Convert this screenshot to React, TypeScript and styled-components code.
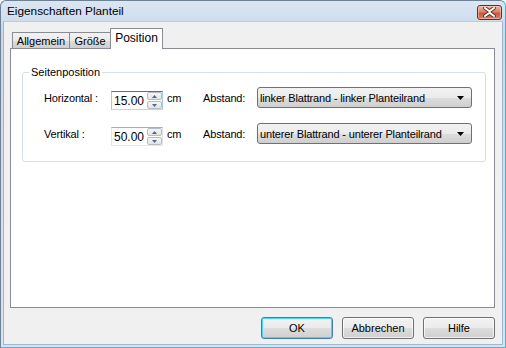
import React from 'react';
import styled, { createGlobalStyle } from 'styled-components';

const GlobalStyle = createGlobalStyle`
  html, body {
    margin: 0;
    padding: 0;
    background: #ffffff;
  }
  body {
    font-family: "Liberation Sans", Arial, sans-serif;
    font-size: 11px;
    color: #000;
  }
`;

const Window = styled.div`
  width: 506px;
  height: 348px;
  box-sizing: border-box;
  display: flex;
  flex-direction: column;
  border: 1px solid;
  border-color: #6f8295 #2bbfee #2bbfee #6f8295;
  border-radius: 6px 6px 0 0;
  background: linear-gradient(#dbe6f3, #c8d9ec 30px, #d6e3f1);
`;

const TitleBar = styled.div`
  height: 20px;
  display: flex;
  align-items: center;
  justify-content: space-between;
  padding: 0 3px 0 6px;
  font-size: 11.8px;
  color: #000;
`;

const CloseButton = styled.div`
  width: 25px;
  height: 15px;
  box-sizing: border-box;
  margin-top: 2px;
  border: 1px solid #6d2b1d;
  border-radius: 3px;
  display: flex;
  align-items: center;
  justify-content: center;
  background: linear-gradient(#ebb4a4, #dc8466 45%, #c9583a 55%, #db7f5f);
  box-shadow: inset 0 0 0 1px rgba(255, 220, 210, 0.5);
`;

const Client = styled.div`
  flex: 1;
  display: flex;
  flex-direction: column;
  margin: 0 2px 2px 2px;
  padding: 7px 7px 0 6px;
  background: #f0f0f0;
  border: 1px solid #9fb6cd;
  border-top-color: #b9cde2;
`;

const TabStrip = styled.div`
  display: flex;
  align-items: flex-end;
  height: 20px;
  padding-left: 2px;
  margin-bottom: -1px;
  position: relative;
  z-index: 1;
`;

const Tab = styled.div<{ $active?: boolean; $width: number }>`
  box-sizing: border-box;
  width: ${(p) => p.$width}px;
  height: ${(p) => (p.$active ? 21 : 17)}px;
  margin-left: -1px;
  display: flex;
  align-items: center;
  justify-content: center;
  padding-bottom: ${(p) => (p.$active ? 3 : 0)}px;
  border: 1px solid #898c95;
  border-bottom: ${(p) => (p.$active ? 'none' : '1px solid #898c95')};
  background: ${(p) =>
    p.$active ? '#ffffff' : 'linear-gradient(#f2f2f2, #ebebeb 50%, #dddddd 51%, #cfcfcf)'};
  font-size: ${(p) => (p.$active ? 12 : 11)}px;
  &:first-child {
    margin-left: 0;
  }
`;

const Panel = styled.div`
  height: 260px;
  box-sizing: border-box;
  border: 1px solid #898c95;
  background: #ffffff;
  padding: 0 9px 0 11px;
`;

const GroupBox = styled.fieldset`
  margin: 17px 0 0 0;
  width: 464px;
  box-sizing: border-box;
  padding: 8px 0 17px 0;
  border: 1px solid #d5dfe5;
  border-radius: 3px;
`;

const GroupLegend = styled.legend`
  margin-left: 6px;
  padding: 0 2px;
  line-height: 13px;
  font-size: 11px;
`;

const FieldGrid = styled.div`
  display: grid;
  margin-left: 21px;
  grid-template-columns: 67px 52px 40px 54px 215px;
  grid-auto-rows: 21px;
  row-gap: 15px;
  align-items: center;
`;

const Label = styled.span<{ $indent?: number }>`
  padding-left: ${(p) => p.$indent ?? 0}px;
  white-space: nowrap;
  letter-spacing: -0.15px;
`;

const SpinBox = styled.div<{ $focused?: boolean }>`
  align-self: start;
  margin-top: 4px;
  height: 19px;
  box-sizing: border-box;
  display: flex;
  align-items: stretch;
  border: 1px solid;
  border-color: ${(p) =>
    p.$focused ? '#3d7bad #a4c9e3 #b7d9ed #a4c9e3' : '#abadb3 #e2e3ea #e3e9ef #e2e3ea'};
  background: #fff;
`;

const SpinValue = styled.span`
  flex: 1;
  display: flex;
  align-items: center;
  padding-left: 2px;
  font-size: 12px;
`;

const SpinButtons = styled.div`
  width: 15px;
  display: flex;
  flex-direction: column;
  gap: 1px;
`;

const SpinArrow = styled.div`
  flex: 1;
  box-sizing: border-box;
  border: 1px solid #b8bcc4;
  border-radius: 2px;
  background: linear-gradient(#f6f6f6, #e4e4e4);
  display: flex;
  align-items: center;
  justify-content: center;
`;

const Combo = styled.div`
  height: 21px;
  box-sizing: border-box;
  display: flex;
  align-items: center;
  justify-content: space-between;
  padding: 0 7px 0 2px;
  border: 1px solid #707070;
  border-radius: 3px;
  background: linear-gradient(#f2f2f2, #ebebeb 50%, #dddddd 51%, #cfcfcf);
  white-space: nowrap;
  letter-spacing: -0.15px;
`;

const ButtonRow = styled.div`
  display: flex;
  justify-content: flex-end;
  gap: 9px;
  padding-top: 9px;
`;

const DialogButton = styled.div<{ $default?: boolean }>`
  width: 72px;
  height: 22px;
  box-sizing: border-box;
  display: flex;
  align-items: center;
  justify-content: center;
  border: 1px solid ${(p) => (p.$default ? '#3c7fb1' : '#707070')};
  border-radius: 3px;
  background: linear-gradient(#f2f2f2, #ebebeb 50%, #dddddd 51%, #cfcfcf);
  box-shadow: ${(p) =>
    p.$default ? 'inset 0 0 0 1px #48d7fb' : 'inset 0 0 0 1px rgba(255,255,255,0.7)'};
  font-size: 11px;
`;

const UpArrow = () => (
  <svg width="5" height="3" viewBox="0 0 5 3">
    <path d="M0 3 L2.5 0 L5 3 Z" fill="#4e6a8e" />
  </svg>
);

const DownArrow = () => (
  <svg width="5" height="3" viewBox="0 0 5 3">
    <path d="M0 0 L5 0 L2.5 3 Z" fill="#4e6a8e" />
  </svg>
);

const ComboArrow = () => (
  <svg width="7" height="4" viewBox="0 0 7 4">
    <path d="M0 0 L7 0 L3.5 4 Z" fill="#000" />
  </svg>
);

const CloseGlyph = () => (
  <svg width="13" height="10" viewBox="0 0 13 10">
    <path
      d="M2 1 L6.5 4.3 L11 1 M2 9 L6.5 5.7 L11 9"
      stroke="#5a2418"
      strokeWidth="3.6"
      fill="none"
      strokeLinecap="round"
    />
    <path
      d="M2 1 L6.5 4.3 L11 1 M2 9 L6.5 5.7 L11 9"
      stroke="#ffffff"
      strokeWidth="2"
      fill="none"
      strokeLinecap="round"
    />
  </svg>
);

interface RowProps {
  label: string;
  value: string;
  distance: string;
  focused?: boolean;
}

const PositionRow: React.FC<RowProps> = ({ label, value, distance, focused }) => (
  <>
    <Label>{label}</Label>
    <SpinBox $focused={focused}>
      <SpinValue>{value}</SpinValue>
      <SpinButtons>
        <SpinArrow>
          <UpArrow />
        </SpinArrow>
        <SpinArrow>
          <DownArrow />
        </SpinArrow>
      </SpinButtons>
    </SpinBox>
    <Label $indent={4}>cm</Label>
    <Label>Abstand:</Label>
    <Combo>
      <span>{distance}</span>
      <ComboArrow />
    </Combo>
  </>
);

const App: React.FC = () => {
  return (
    <>
      <GlobalStyle />
      <Window>
        <TitleBar>
          <span>Eigenschaften Planteil</span>
          <CloseButton>
            <CloseGlyph />
          </CloseButton>
        </TitleBar>
        <Client>
          <TabStrip>
            <Tab $width={58}>Allgemein</Tab>
            <Tab $width={42}>Größe</Tab>
            <Tab $width={53} $active>
              Position
            </Tab>
          </TabStrip>
          <Panel>
            <GroupBox>
              <GroupLegend>Seitenposition</GroupLegend>
              <FieldGrid>
                <PositionRow
                  label="Horizontal :"
                  value="15.00"
                  distance="linker Blattrand - linker Planteilrand"
                  focused
                />
                <PositionRow
                  label="Vertikal :"
                  value="50.00"
                  distance="unterer Blattrand - unterer Planteilrand"
                />
              </FieldGrid>
            </GroupBox>
          </Panel>
          <ButtonRow>
            <DialogButton $default>OK</DialogButton>
            <DialogButton>Abbrechen</DialogButton>
            <DialogButton>Hilfe</DialogButton>
          </ButtonRow>
        </Client>
      </Window>
    </>
  );
};

export default App;
